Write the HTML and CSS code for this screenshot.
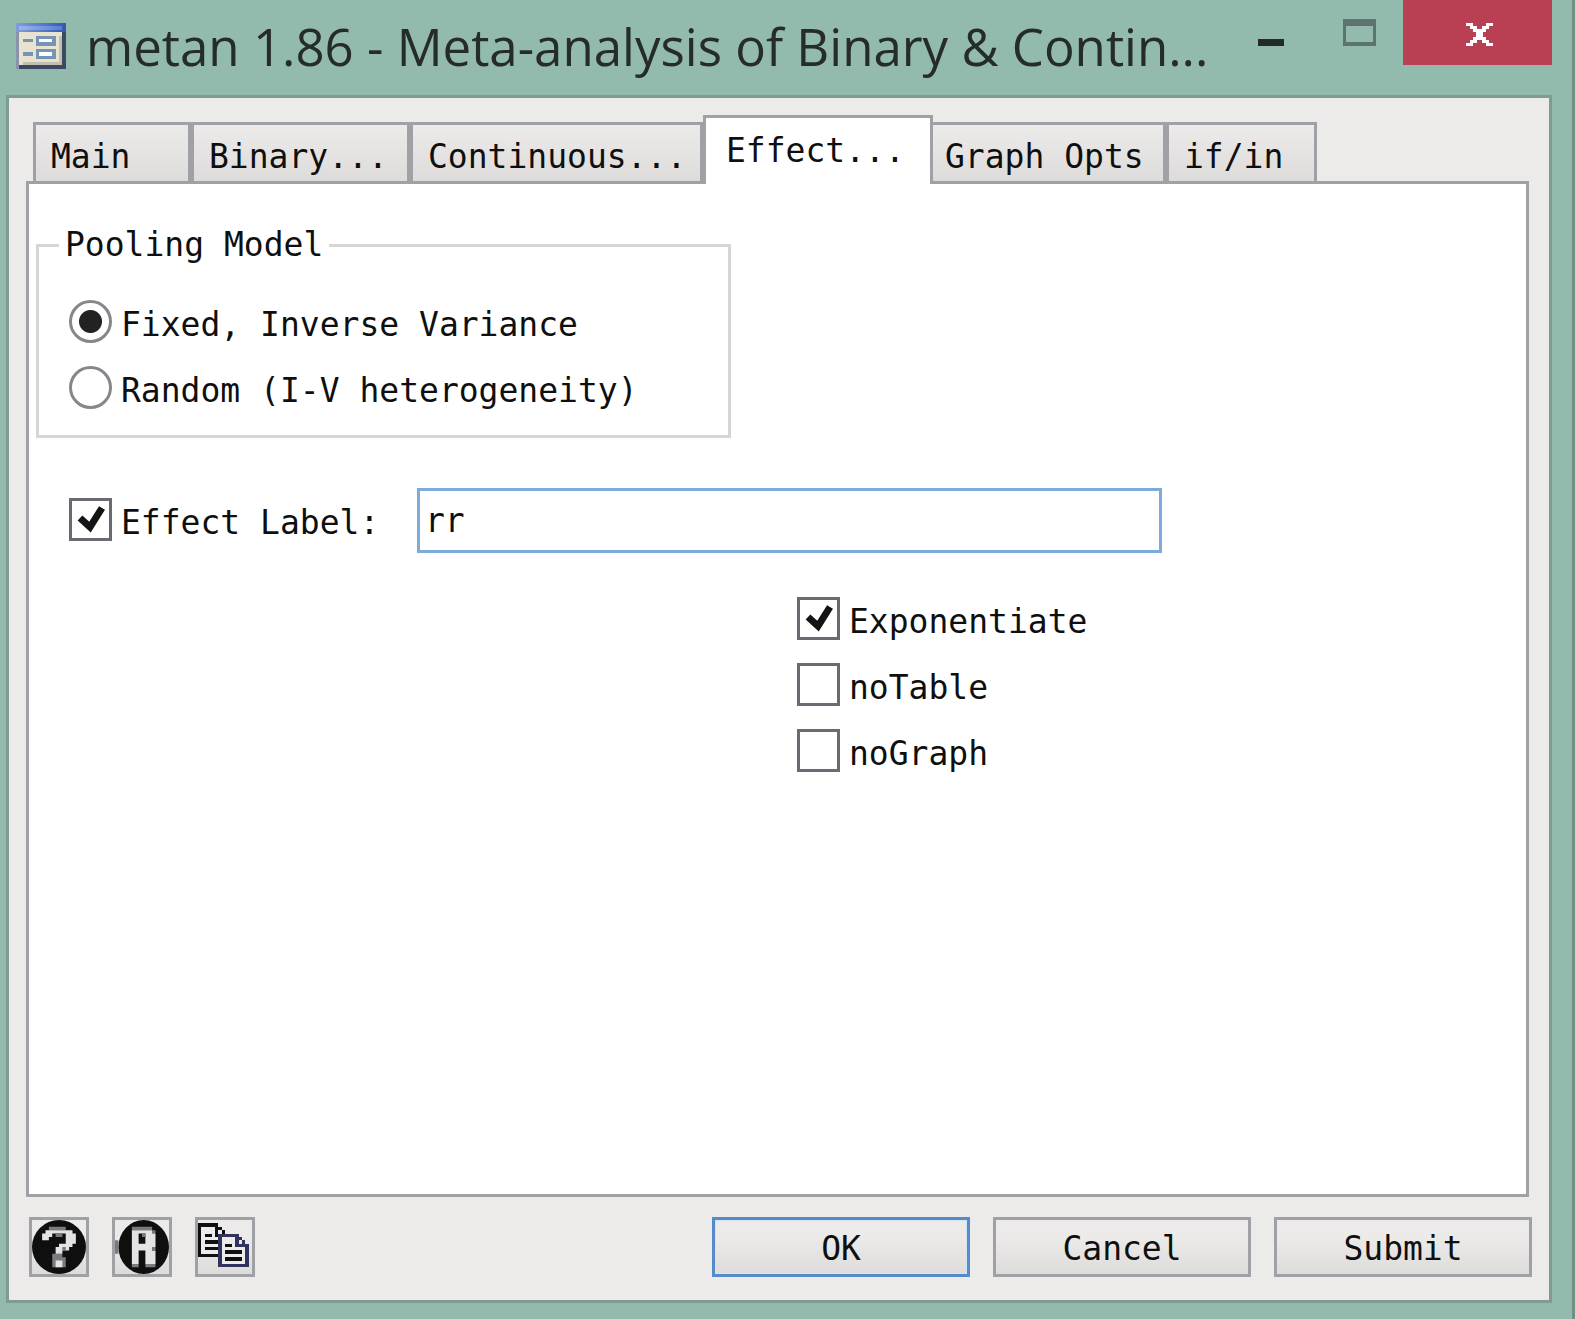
FILE: index.html
```html
<!DOCTYPE html>
<html lang="en">
<head>
<meta charset="utf-8">
<title>metan 1.86</title>
<link rel="stylesheet" href="styles.css">
</head>
<body>
<div class="window">
  <header class="titlebar">
    <svg class="app-icon" viewBox="0 0 50 46" aria-hidden="true">
      <defs>
        <linearGradient id="bar" x1="0" x2="1"><stop offset="0" stop-color="#7f9fdc"/><stop offset="1" stop-color="#3458b0"/></linearGradient>
        <linearGradient id="shine" x1="0" x2="1"><stop offset="0" stop-color="#9bb5ee"/><stop offset="1" stop-color="#557fd6"/></linearGradient>
      </defs>
      <rect width="50" height="46" fill="#8794ab"/>
      <path d="M46 9h4v37H3v-4h43z" fill="#3b4763"/>
      <rect x="3" y="9" width="43" height="33" fill="#e7e3cf"/>
      <path d="M43 13h3v29H7v-3h36z" fill="#c3bfae"/>
      <rect width="50" height="9" fill="url(#bar)"/>
      <rect x="3" y="3" width="43" height="4" fill="url(#shine)"/>
      <path d="M7 16h10v3H7zM7 29h10v4H7zM20 13h20v10H20zM20 26h20v10H20z" fill="#7694b8"/>
      <path d="M23 16h13v3H23zM23 29h13v4H23z" fill="#fff"/>
    </svg>
    <h1 class="title">metan 1.86 - Meta-analysis of Binary &amp; Contin...</h1>
    <div class="window-buttons">
      <button class="window-button" type="button" aria-label="Minimize">
        <svg width="26" height="7" viewBox="0 0 26 7"><rect width="26" height="7" fill="#252a29"/></svg>
      </button>
      <button class="window-button maximize" type="button" aria-label="Maximize">
        <svg width="33" height="27" viewBox="0 0 33 27"><path fill-rule="evenodd" d="M0 0h33v27H0zM3 7v16h27V7z" fill="#5c7370"/></svg>
      </button>
      <button class="window-button close" type="button" aria-label="Close">
        <svg width="27" height="23" viewBox="0 0 27 23" shape-rendering="crispEdges"><path d="M0 0h7v3H0zM20 0h7v3h-7zM4 3h7v3H4zM16 3h7v3h-7zM7 6h13v3H7zM10 9h7v5h-7zM7 14h13v3H7zM4 17h7v3H4zM16 17h7v3h-7zM0 20h7v3H0zM20 20h7v3h-7z" fill="#fff"/></svg>
      </button>
    </div>
  </header>

  <main class="client">
    <div class="tabs" role="tablist">
      <button class="tab" type="button" role="tab">Main</button>
      <button class="tab" type="button" role="tab">Binary...</button>
      <button class="tab" type="button" role="tab">Continuous...</button>
      <button class="tab active" type="button" role="tab" aria-selected="true">Effect...</button>
      <button class="tab after-active" type="button" role="tab">Graph Opts</button>
      <button class="tab" type="button" role="tab">if/in</button>
    </div>

    <form class="pane" id="effect-form">
      <fieldset class="group">
        <legend>Pooling Model</legend>
        <label class="option"><input type="radio" name="model" checked><span>Fixed, Inverse Variance</span></label>
        <label class="option"><input type="radio" name="model"><span>Random (I-V heterogeneity)</span></label>
      </fieldset>
      <div class="effect-row">
        <label class="option"><input type="checkbox" checked><span>Effect Label:</span></label>
        <input class="textbox" type="text" value="rr" aria-label="Effect Label">
      </div>
      <div class="switches">
        <label class="option"><input type="checkbox" checked><span>Exponentiate</span></label>
        <label class="option"><input type="checkbox"><span>noTable</span></label>
        <label class="option"><input type="checkbox"><span>noGraph</span></label>
      </div>
    </form>

    <footer class="footer">
      <div class="tools">
        <button class="tool" type="button" aria-label="Help">
          <svg viewBox="0 0 16 16">
            <circle cx="8" cy="8" r="8" fill="#0f0f0f"/>
            <path d="M5 2h5v1H5zM6 10h3v1h1v3H6z" fill="#7a7b80"/>
            <path d="M4 3h8v1h1v3h-1v1h-1v1H9v1H7V8h1V7h2V4H6v1H5v1H3V4h1zM7 12h2v2H7z" fill="#e3e3e3"/>
            <path d="M7 4h2v1H7zM9 8h1v1H9z" fill="#7a7b80"/>
          </svg>
        </button>
        <button class="tool" type="button" aria-label="Reset">
          <svg viewBox="0 0 16 16">
            <ellipse cx="8.5" cy="8" rx="7.5" ry="8" fill="#0f0f0f"/>
            <path d="M0 6h1v4H0zM5 2h6v1H5zM11 3h1v1h-1zM5 13h2v1H5zM9 13h3v1H9z" fill="#7a7b80"/>
            <path fill-rule="evenodd" d="M5 3h6v1h1v4h-1v1h1v4H9V9H7v4H5zM7 4v3h2V4z" fill="#e3e3e3"/>
            <path d="M8 4h1v1H8zM11 8h1v1h-1z" fill="#7a7b80"/>
          </svg>
        </button>
        <button class="tool" type="button" aria-label="Copy">
          <svg viewBox="0 0 16 16" shape-rendering="crispEdges">
            <path d="M0 1h6v1h1v1h1v1h1v7H0z" fill="#0f0f0f"/>
            <path d="M1 2h4v3h3v5H1z" fill="#ebebeb"/>
            <path d="M6 3h1v1H6z" fill="#ebebeb"/>
            <path d="M2 4h2v1H2zM2 6h4v1H2zM2 8h4v1H2z" fill="#0f0f0f"/>
            <path d="M6 4h6v1h1v1h1v1h1v7H6z" fill="#31335f"/>
            <path d="M7 5h4v3h3v5H7zM12 6h1v1h-1z" fill="#ebebeb"/>
            <path d="M8 7h2v1H8zM8 9h5v1H8zM8 11h5v1H8z" fill="#0f0f0f"/>
          </svg>
        </button>
      </div>
      <div class="actions">
        <button class="push default" type="submit" form="effect-form">OK</button>
        <button class="push" type="button">Cancel</button>
        <button class="push" type="button">Submit</button>
      </div>
    </footer>
  </main>
</div>
</body>
</html>
```
FILE: styles.css
```css
:root {
  --frame: #92bbad;
  --frame-edge: #7f9b92;
  --face: #ecebe9;
  --line: #a0a1a5;
  --ink: #0f0f0f;
}

* { box-sizing: border-box; }

body {
  margin: 0;
  background: var(--frame);
  color: var(--ink);
  font: 33px/40px "DejaVu Sans Mono", "Liberation Mono", monospace;
}

button, input { font: inherit; color: inherit; margin: 0; }
button { border-radius: 0; padding: 0; }
svg { display: block; }

.window {
  display: flex;
  flex-direction: column;
  min-height: 100vh;
  padding: 0 20px 16px 6px;
  border-right: 3px solid #6e9087;
}

/* Title bar */
.titlebar {
  display: flex;
  align-items: flex-start;
  height: 95px;
  padding-left: 10px;
}
.app-icon { width: 50px; height: 46px; margin-top: 23px; flex: none; }
.title {
  flex: 1;
  min-width: 0;
  margin: 0 0 0 20px;
  padding-top: 10px;
  white-space: nowrap;
  color: #262b2b;
  font: 400 51px/72px "Open Sans", "Noto Sans", sans-serif;
}
.window-buttons { display: flex; flex: none; }
.window-button {
  display: flex;
  justify-content: center;
  width: 89px;
  height: 65px;
  padding: 39px 0 0 2px;
  border: 0;
  background: none;
}
.window-button.maximize { padding-top: 19px; }
.window-button.close {
  width: 149px;
  padding: 23px 0 0 4px;
  background: #b94053;
}

/* Dialog body */
.client {
  flex: 1;
  display: flex;
  flex-direction: column;
  padding: 17px 17px 23px;
  background: var(--face);
  border: 3px solid var(--frame-edge);
}

.tabs {
  display: grid;
  grid-template-columns: 158px 219px 293px 230px 233px 151px;
  align-items: end;
  height: 69px;
  margin: 0 0 -3px 7px;
}
.tab {
  height: 62px;
  padding: 7px 0 0 15px;
  border: 3px solid var(--line);
  background: linear-gradient(#ecebe9, #dddcdb);
  text-align: left;
  white-space: nowrap;
}
.tab.active {
  height: 69px;
  padding: 0 0 0 20px;
  border-bottom: 0;
  background: #fff;
  z-index: 1;
}
.tab.after-active { border-left: 0; padding-left: 12px; }

.pane {
  flex: 1;
  margin-right: 3px;
  padding: 41px 7px;
  background: #fff;
  border: 3px solid var(--line);
}

.group {
  width: 695px;
  margin: 0;
  padding: 35px 30px 26px 20px;
  border: 3px solid #d6d6d6;
}
.group legend { padding: 0 6px; }
.group .option { margin-left: 10px; }

.option {
  display: flex;
  align-items: center;
  gap: 9px;
  height: 43px;
  white-space: nowrap;
}
.option + .option { margin-top: 23px; }
.option span { padding-top: 6px; }

input[type="radio"], input[type="checkbox"] {
  appearance: none;
  flex: none;
  width: 43px;
  height: 43px;
  background: #fff center / 100% no-repeat;
  border: 3px solid #686b73;
}
input[type="radio"] { border-radius: 50%; border-color: #85878c; }
input[type="radio"]:checked {
  background-image: radial-gradient(circle, #222 11px, transparent 12px);
}
input[type="checkbox"]:checked {
  background-image: url("data:image/svg+xml,%3Csvg xmlns='http://www.w3.org/2000/svg' viewBox='0 0 37 37'%3E%3Cpath d='M8 17l10 9L30 7' fill='none' stroke='%23141414' stroke-width='7'/%3E%3C/svg%3E");
}

.effect-row {
  display: grid;
  grid-template-columns: 348px minmax(0, 745px);
  align-items: center;
  margin: 50px 0 0 33px;
}
.effect-row .option { padding-bottom: 2px; }
.textbox {
  height: 65px;
  padding: 0 5px;
  background: #fff;
  border: 3px solid #7eabd9;
  border-radius: 0;
  outline: 0;
}

.switches { margin: 44px 0 0 761px; }

/* Bottom row */
.footer {
  display: flex;
  justify-content: space-between;
  margin-top: 20px;
  padding-left: 3px;
}
.tools, .actions { display: flex; gap: 23px; }
.tool, .push {
  height: 60px;
  border: 3px solid var(--line);
  background: linear-gradient(#ecebe9 30%, #dddcdb);
}
.tool { width: 60px; }
.tool svg { width: 54px; height: 54px; }
.push { width: 258px; padding-top: 3px; }
.push.default {
  border-color: #568bc9;
  box-shadow: inset 0 0 0 1px #d3e4f5;
}
```
